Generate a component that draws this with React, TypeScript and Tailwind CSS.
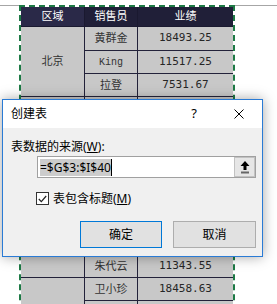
import React from 'react';

// Sheet data behind the dialog
const groups: { region: string; items: [string, string][] }[] = [
  { region: '北京', items: [['黄群金', '18493.25'], ['King', '11517.25'], ['拉登', '7531.67']] },
  { region: '上海', items: [['刘德华', '9635.42'], ['张学友', '15263.80'], ['黎明', '8741.36'], ['郭富城', '12587.90']] },
  { region: '广州', items: [['王小明', '6985.12'], ['李四', '13654.28'], ['赵敏', '10236.45'], ['朱代云', '11343.55']] },
  { region: '深圳', items: [['卫小珍', '18458.63'], ['周芷若', '9852.14'], ['陈晓', '7425.36'], ['孙丽', '14236.71']] },
];

const spanClass: Record<number, string> = {
  2: 'row-span-2',
  3: 'row-span-3',
  4: 'row-span-4',
};

const cjk = { fontFamily: '"Noto Sans", "Noto Sans CJK SC", sans-serif' };
const mono = { fontFamily: '"DejaVu Sans Mono", monospace' };

function Sheet() {
  return (
    <div className="pt-[5px]">
      <div className="border-t border-[#a6a6a6]">
        <div className="-mt-px ml-[19px] w-[216px] border-x-2 border-t-2 border-dashed border-[#1d7a45] bg-white">
          <div
            className="grid grid-cols-[64px_53px_95px] grid-rows-[20px_24px_23px_23px_23px_23px_23px_23px_23px_22px_22px_22px_23px_23px_23px_23px] text-[11px]"
            style={cjk}
          >
            <div className="flex items-center justify-center border-b border-r border-[#1a1930] bg-[#2a2948] text-white">区域</div>
            <div className="flex items-center justify-center border-b border-r border-[#1a1930] bg-[#201f38] text-white">销售员</div>
            <div className="flex items-center justify-center border-b border-[#1a1930] bg-[#201f38] text-white">业绩</div>
            {groups.map((g) =>
              g.items.map(([name, value], i) => (
                <React.Fragment key={name}>
                  {i === 0 && (
                    <div
                      className={`${spanClass[g.items.length]} flex items-center justify-center border-b border-r border-[#23223a] bg-[#c8c8c8] text-[#333]`}
                    >
                      {g.region}
                    </div>
                  )}
                  <div className="flex items-center justify-center border-b border-r border-[#23223a] bg-[#c8c8c8] text-[#333]">
                    {name === 'King' ? (
                      <span className="text-[10px]" style={{ fontFamily: '"Liberation Mono", monospace' }}>
                        {name}
                      </span>
                    ) : (
                      name
                    )}
                  </div>
                  <div className="flex items-center justify-center border-b border-[#23223a] bg-[#c8c8c8] text-[#262626]" style={mono}>
                    {value}
                  </div>
                </React.Fragment>
              ))
            )}
          </div>
        </div>
      </div>
    </div>
  );
}

function CollapseIcon() {
  return (
    <svg width="10" height="13" viewBox="0 0 10 13">
      <path d="M5 0 L9.5 5 L6.5 5 L6.5 9 L3.5 9 L3.5 5 L0.5 5 Z" fill="#000" />
      <rect x="1" y="10.5" width="8" height="2" fill="#666" />
    </svg>
  );
}

function CreateTableDialog() {
  return (
    <div
      className="absolute left-[2px] top-[99px] flex h-[158px] w-[261px] flex-col border border-[#2a7bd5] bg-[#f0f0f0] text-[12px] text-black shadow-[0_0_12px_rgba(0,0,0,0.35)]"
      style={cjk}
    >
      {/* Title bar */}
      <div className="flex h-[28px] items-center bg-white pl-[8px]">
        <span className="flex-1">创建表</span>
        <span className="mr-[37px] text-[13px]">?</span>
        <svg className="mr-[18px]" width="10" height="10" viewBox="0 0 10 10">
          <path d="M0.5 0.5 L9.5 9.5 M9.5 0.5 L0.5 9.5" stroke="#000" strokeWidth="1" />
        </svg>
      </div>

      {/* Body */}
      <div className="flex flex-1 flex-col pl-[8px] pt-[10px]">
        <div className="flex h-[17px] items-center leading-[17px]">
          <span>表数据的来源(</span>
          <span className="underline">W</span>
          <span>):</span>
        </div>
        <div className="ml-[26px] mt-px flex h-[22px] w-[219px] items-stretch border border-[#a0a0a0] bg-white">
          <div className="flex flex-1 items-center pl-[2px]">
            <span className="bg-[#cccccc] leading-[17px]" style={{ fontFamily: '"Noto Sans", sans-serif' }}>
              =$G$3:$I$40
            </span>
            <span className="h-[17px] w-px bg-black" />
          </div>
          <div className="flex w-[21px] items-center justify-center border border-[#c2c2c2] bg-[#e6e6e6]">
            <CollapseIcon />
          </div>
        </div>

        <div className="ml-[25px] mt-[14px] flex h-[13px] items-center">
          <div className="flex h-[13px] w-[13px] items-center justify-center border border-[#333] bg-white">
            <svg width="9" height="8" viewBox="0 0 9 8">
              <path d="M0.8 4 L3.3 6.6 L8.2 1" stroke="#222" strokeWidth="1.2" fill="none" />
            </svg>
          </div>
          <div className="ml-[4px] flex items-center leading-[17px]">
            <span>表包含标题(</span>
            <span className="underline">M</span>
            <span>)</span>
          </div>
        </div>

        <div className="ml-[69px] mt-[16px] flex gap-[11px]">
          <button className="h-[27px] w-[82px] border border-[#0078d7] bg-[#e1e1e1]">确定</button>
          <button className="h-[27px] w-[83px] border border-[#adadad] bg-[#e1e1e1]">取消</button>
        </div>
      </div>
    </div>
  );
}

export default function App() {
  return (
    <div className="relative h-[304px] w-[277px] overflow-hidden bg-white">
      <Sheet />
      <CreateTableDialog />
    </div>
  );
}
